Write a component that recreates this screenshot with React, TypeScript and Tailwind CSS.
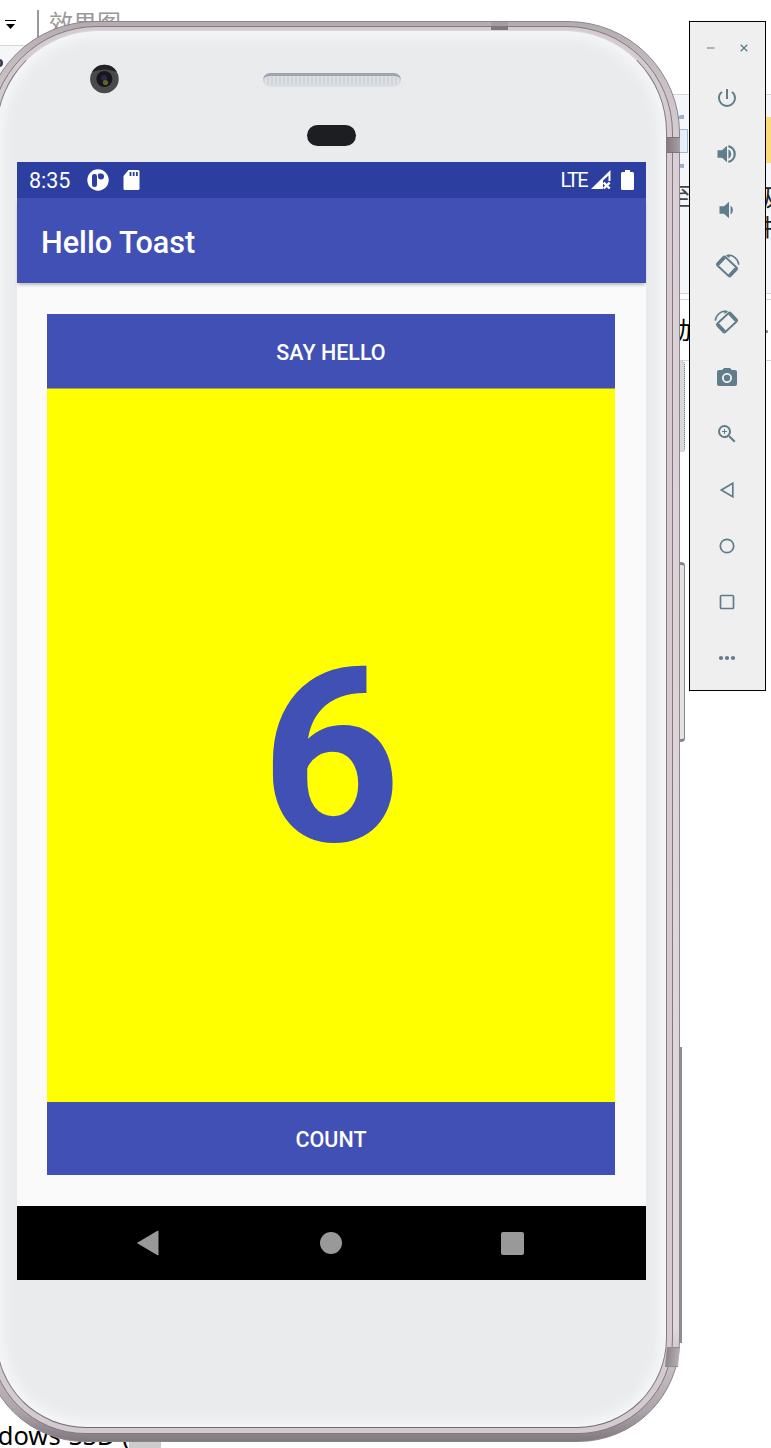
import type { ReactNode } from "react";
import { MdPowerSettingsNew, MdPhotoCamera, MdZoomIn } from "react-icons/md";

function RotateIcon({ mirrored = false }: { mirrored?: boolean }) {
  return (
    <svg width="26" height="26" viewBox="-13 -13 26 26" fill="none" stroke="#607d8b">
      <g transform={mirrored ? "translate(0 0.5) scale(-1 1)" : "translate(0 0.5)"}>
        <g transform="rotate(43)">
          <rect x="-9.2" y="-5.8" width="18.4" height="11.6" rx="1.5" strokeWidth="1.9" />
          <path d="M-8-5v10M8-5v10" strokeWidth="3.4" />
        </g>
        <path d="M0-10.9C6-12.2 11.4-7.4 11.7-1.7" strokeWidth="1.5" />
        <path d="M-1.5-10.9L2.7-12 2.7-8.5z" fill="#607d8b" stroke="none" />
      </g>
    </svg>
  );
}

function SpeakerIcon({ loud = false }: { loud?: boolean }) {
  return loud ? (
    <svg width="24" height="24" viewBox="0 0 24 24" fill="#607d8b">
      <path d="M2.5 8.3H7L12 3.8v16.4l-5-4.5H2.5zM13.4 7.3a5.3 5.3 0 0 1 0 9.4z" />
      <path d="M13.4 4.1a8.1 8.1 0 0 1 0 15.8" fill="none" stroke="#607d8b" strokeWidth="2.3" />
    </svg>
  ) : (
    <svg width="24" height="24" viewBox="0 0 24 24" fill="#607d8b">
      <path d="M4.5 8.3H9L14 3.8v16.4l-5-4.5H4.5zM15.6 7.5a5.5 5.5 0 0 1 0 9z" />
    </svg>
  );
}

function Outline({ children }: { children: ReactNode }) {
  return (
    <svg width="24" height="24" viewBox="0 0 24 24" fill="none" stroke="#607d8b" strokeWidth="1.7">
      {children}
    </svg>
  );
}

function Toolbar() {
  const items: ReactNode[] = [
    <MdPowerSettingsNew size={24} />,
    <SpeakerIcon loud />,
    <SpeakerIcon />,
    <RotateIcon />,
    <RotateIcon mirrored />,
    <MdPhotoCamera size={24} />,
    <MdZoomIn size={24} />,
    <Outline><path d="M6.3 12L17.8 5.2v13.6z" /></Outline>,
    <Outline><circle cx="12" cy="12" r="6.7" /></Outline>,
    <Outline><rect x="5.5" y="5.5" width="13" height="13" rx="1" /></Outline>,
    <svg width="24" height="24" viewBox="0 0 24 24" fill="#607d8b">
      <circle cx="6" cy="12" r="2.1" /><circle cx="12" cy="12" r="2.1" /><circle cx="18" cy="12" r="2.1" />
    </svg>,
  ];
  return (
    <aside className="relative ml-[9px] mt-[21px] flex h-[670px] w-[77px] shrink-0 flex-col border border-black bg-[#efefef] text-[#607d8b]">
      <div className="flex h-12 items-center justify-between px-[17px] pt-1">
        <svg width="8" height="8" viewBox="0 0 8 8"><path d="M0 4h7.5" stroke="#a5b4bc" strokeWidth="2" /></svg>
        <svg width="8" height="8" viewBox="0 0 8 8"><path d="M.7.7l6.6 6.6M7.3.7L.7 7.3" stroke="#607d8b" strokeWidth="1.4" /></svg>
      </div>
      {items.map((item, i) => (
        <div key={i} className="flex h-14 shrink-0 items-center justify-center pr-px">{item}</div>
      ))}
    </aside>
  );
}

function Desktop() {
  return (
    <div className="absolute inset-0 overflow-hidden font-['Noto_Sans','Noto_Sans_CJK_SC',sans-serif]">
      <svg className="absolute left-[5px] top-5" width="11" height="10" viewBox="0 0 11 10"><path d="M0 .5h11" stroke="#000" /><path d="M1 4h9L5.5 9z" /></svg>
      <div className="absolute left-[37px] top-[10px] h-7 w-[2px] bg-[#999]" />
      <div className="absolute left-[49px] top-[7px] whitespace-nowrap text-2xl text-[#999]">效果图</div>
      <div className="absolute left-0 top-[45px] h-20 w-8 border-t border-[#d5d5d5] bg-[#f5f6f8]" />
      <div className="absolute left-[-5px] top-[59px] size-2 rounded-full border-2 border-[#323b62] bg-[#b84735]" />
      <div className="absolute left-[660px] top-[94px] h-[200px] w-[111px] border-y border-[#d5d5d5] bg-[#f5f6f9]" />
      <div className="absolute left-[660px] top-[299px] h-[62px] w-[111px] border-y border-[#d5d5d5]" />
      <div className="absolute left-[676px] top-[129px] h-6 w-3 border border-[#a3b4d3] bg-[#e6eefb]" />
      <div className="absolute left-[678px] top-[115px] h-1 w-[6px] rounded-tl-full bg-[#9dafd0]" />
      <div className="absolute left-[678px] top-[164px] h-1 w-[6px] rounded-bl-full bg-[#9dafd0]" />
      <div className="absolute left-[765px] top-[117px] h-[46px] w-[6px] bg-[#fbdb78]" />
      <div className="absolute left-[667px] top-[180px] text-2xl text-[#444]">至</div>
      <div className="absolute left-[755px] top-[181px] whitespace-nowrap text-2xl text-[#222]">级</div>
      <div className="absolute left-[752px] top-[211px] whitespace-nowrap text-2xl text-[#222]">件</div>
      <div className="absolute left-[667px] top-[314px] text-2xl text-black">动</div>
      <div className="absolute left-[765px] top-[330px] size-[3px] rounded-full bg-[#777]" />
      <div className="absolute left-[-18px] top-[1417px] whitespace-nowrap text-[25.5px] leading-[36px] text-black">ndows-SSD (</div>
      <div className="absolute left-[129px] top-[1436px] h-3 w-8 bg-[#ccc]" />
      <div className="absolute left-[678px] top-[361px] h-[91px] w-[7px] rounded-r-sm border-r border-dotted border-[#777] bg-[#d7dadb]" />
      <div className="absolute left-[678px] top-[562px] h-[180px] w-[7px] rounded-r-sm border-y-[3px] border-r border-[#85858a] bg-[#e3e4e2]" />
      <div className="absolute left-[678px] top-[1047px] h-[296px] w-1 bg-[#918b91]" />
    </div>
  );
}

function StatusBar() {
  return (
    <div className="flex h-9 items-center bg-[#2c3e9f] text-white">
      <span className="ml-3 mt-px w-[58px] text-[21.5px] leading-9">8:35</span>
      <svg width="22" height="22" viewBox="0 0 22 22">
        <circle cx="11" cy="11" r="10.7" fill="#fff" />
        <rect x="5" y="5" width="5" height="13" rx="2.3" fill="#2c3e9f" />
        <circle cx="14" cy="7.5" r="3" fill="#2c3e9f" />
        <path d="M11.2 4.7h2.7v2.7h-2.7z" fill="#2c3e9f" />
      </svg>
      <svg className="ml-[14px]" width="17" height="20" viewBox="0 0 17 20">
        <path d="M5.5 0H15a1.5 1.5 0 0 1 1.5 1.5v17A1.5 1.5 0 0 1 15 20H2a1.5 1.5 0 0 1-1.5-1.5V6z" fill="#fff" />
        <path d="M7.5 2v4M10.7 2v4M13.9 2v4" stroke="#2c3e9f" strokeWidth="1.8" />
      </svg>
      <span className="ml-auto text-[20px] leading-9 tracking-[-1.6px]">LTE</span>
      <svg className="ml-[4px]" width="21" height="20" viewBox="0 0 21 20">
        <path d="M0 19L19.5 0V11h-2V5.5L12 10.5V19z" fill="#fff" />
        <path d="M12.7 12.7l6 5.800M18.700 12.700L12.700 18.500" stroke="#fff" strokeWidth="2.4" />
      </svg>
      <svg className="ml-[9px] mr-3" width="13" height="20" viewBox="0 0 13 20">
        <path d="M4 0h5v2h2.5A1.5 1.5 0 0 1 13 3.5v15a1.5 1.5 0 0 1-1.5 1.5h-10A1.5 1.5 0 0 1 0 18.5v-15A1.5 1.5 0 0 1 1.5 2H4z" fill="#fff" />
      </svg>
    </div>
  );
}

function Screen() {
  return (
    <main className="mx-5 flex h-[1118px] flex-col bg-[#fafafa] font-['Roboto',sans-serif]">
      <StatusBar />
      <header className="flex h-[85px] items-center bg-[#4150b5] pl-6 pt-[5px] text-[30.6px] font-medium text-white shadow-[0_3px_3px_-1px_rgba(0,0,0,0.25)]">
        Hello Toast
      </header>
      <section className="flex h-[923px] flex-col pb-[31px] pl-[30px] pr-[31px] pt-[31px]">
        <button className="h-[74px] bg-[#4150b5] pt-[4px] text-[21.5px] font-medium text-white">SAY HELLO</button>
        <div className="flex flex-1 items-center justify-center bg-[#ffff00] pt-[25px] text-[244px] font-bold leading-none text-[#4150b5] shadow-[inset_0_1px_0_#a0a055]">
          <span>6</span>
        </div>
        <button className="h-[73px] bg-[#4150b5] pt-[3px] text-[21.5px] font-medium text-white">COUNT</button>
      </section>
      <nav className="flex h-[74px] items-center justify-between bg-black pl-[119px] pr-[122px]">
        <svg width="24" height="26" viewBox="0 0 24 26"><path d="M.8 13L21.5.8q1-.5 1 .7v23q0 1.200-1 .7z" fill="#999" /></svg>
        <div className="size-[22px] rounded-full bg-[#999]" />
        <div className="size-[23px] rounded-[2px] bg-[#999]" />
      </nav>
    </main>
  );
}

function Phone() {
  return (
    <div className="relative ml-[-17px] w-[697px] shrink-0 pt-[21px]">
      <div className="h-[1421px] rounded-b-[102px] rounded-t-[112px] border border-[#8c858a] bg-[linear-gradient(180deg,#b5acb1_0%,#c9c0c5_4%,#d8d0d5_9%,#dfd8dc_92%,#aaa2a8_98%,#81797f_100%)] px-[6px] pb-[7px] pt-[4px]">
        <div className="h-full rounded-b-[95px] rounded-t-[107px] border border-[#81797f] bg-[#d3cbd0] px-[5px] pb-[5px] pt-[3px]">
          <div className="flex h-full flex-col rounded-b-[90px] rounded-t-[102px] border border-x-[#817c81] border-b-[#716b70] border-t-[#d9d5d8] bg-[#e9ebec] shadow-[inset_0_0_14px_6px_#f6f7f9]">
            <div className="flex h-[131px] shrink-0 flex-col">
              <div className="flex h-[94px] items-center">
                <svg className="ml-[92px] mt-[2px]" width="30" height="30" viewBox="0 0 30 30">
                  <circle cx="15.4" cy="15" r="14.3" fill="#49494e" />
                  <path d="M3 8a14.3 14.3 0 0 1 25 0Q15 3 3 8" fill="#222226" />
                  <circle cx="15.4" cy="15" r="8" fill="#17171b" />
                  <circle cx="15" cy="14" r="3" fill="#29294b" />
                  <circle cx="16.5" cy="18.5" r="2.6" fill="#66602a" />
                </svg>
                <div className="ml-[144px] mt-[3px] h-[14px] w-[138px] rounded-[7px] border-b-2 border-t-[3px] border-b-[#dddfe1] border-t-[#9fa4ae] bg-[#d0d5da] bg-[repeating-linear-gradient(90deg,transparent_0_2px,#dce0e4_2px_4px)]" />
              </div>
              <div className="ml-[310px] h-[21px] w-[49px] rounded-full bg-[#1c1e22]" />
            </div>
            <Screen />
          </div>
        </div>
      </div>
      <div className="absolute left-[508px] top-[22px] h-2 w-[17px] border-b-4 border-[#81777c] bg-[#a69da2]" />
      <div className="absolute left-[684px] top-[137px] h-4 w-[13px] border-y border-[#777] bg-gradient-to-r from-[#837c81] to-[#a79fa4]" />
      <div className="absolute left-[683px] top-[1347px] h-5 w-[13px] -skew-x-6 border-y border-[#918b8f] bg-gradient-to-r from-[#8c858a] to-[#b7afb4]" />
    </div>
  );
}

export default function App() {
  return (
    <div className="relative flex h-[1448px] w-[771px] items-start overflow-hidden bg-white">
      <Desktop />
      <Phone />
      <Toolbar />
    </div>
  );
}
